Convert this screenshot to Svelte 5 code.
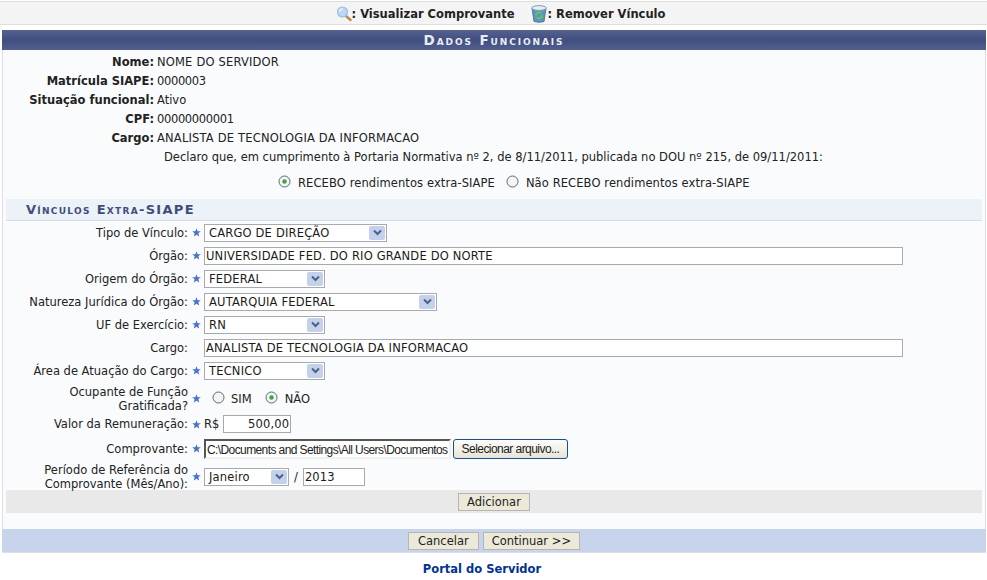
<script>
  const dados = [
    { label: 'Nome:', value: 'NOME DO SERVIDOR', kind: 'caps' },
    { label: 'Matrícula SIAPE:', value: '0000003', kind: 'num' },
    { label: 'Situação funcional:', value: 'Ativo', kind: '' },
    { label: 'CPF:', value: '00000000001', kind: 'num' },
    { label: 'Cargo:', value: 'ANALISTA DE TECNOLOGIA DA INFORMACAO', kind: 'caps' }
  ];
</script>

{#snippet star()}
  <svg class="star" width="9" height="9" viewBox="0 0 10 10" aria-hidden="true">
    <path d="M5 0.3 6.3 3.5 9.8 3.7 7.1 5.9 8 9.4 5 7.5 2 9.4 2.9 5.9 0.2 3.7 3.7 3.5Z" fill="#4a74c9" />
  </svg>
{/snippet}

{#snippet radio(checked)}
  <svg class="radio" width="13" height="13" viewBox="0 0 13 13" aria-hidden="true">
    <circle cx="6.5" cy="6.5" r="5.5" fill="#f4f4f0" stroke="#4f6a86" />
    {#if checked}<circle cx="6.5" cy="6.5" r="2.2" fill="#3f9f4f" />{/if}
  </svg>
{/snippet}

{#snippet select(text, width)}
  <div class="select" style="width: {width}px">
    <span>{text}</span>
    <span class="arrow">
      <svg width="9" height="7" viewBox="0 0 9 7" aria-hidden="true">
        <path d="M1 1.5 4.5 5 8 1.5" fill="none" stroke="#4d6185" stroke-width="2" />
      </svg>
    </span>
  </div>
{/snippet}

<div class="page">
  <div class="toolbar">
    <span class="tool">
      <svg width="16" height="16" viewBox="0 0 16 16" aria-hidden="true">
        <path d="M10 10 14.5 14" stroke="#c08a4c" stroke-width="2.4" stroke-linecap="round" />
        <circle cx="6.5" cy="6" r="5" fill="#bcd6f4" stroke="#9dbde2" stroke-width="1.2" />
        <path d="M3.5 6a3 3 0 0 1 3-3" fill="none" stroke="#eef6ff" stroke-width="1.4" />
      </svg>
      : Visualizar Comprovante
    </span>
    <span class="tool">
      <svg width="16" height="18" viewBox="0 0 16 18" aria-hidden="true">
        <path d="M1 3 3 16.5Q8 18 13 16.5L15 3Z" fill="#5f93c0" stroke="#5578a0" />
        <ellipse cx="8" cy="3" rx="7.2" ry="2.4" fill="#e4eef4" stroke="#7d9db4" />
        <path d="M5 10.5a3 3 0 0 1 5.2-2.2M11 10a3 3 0 0 1-5.2 2.4" fill="none" stroke="#5fd04c" stroke-width="1.7" />
      </svg>
      : Remover Vínculo
    </span>
  </div>

  <form class="panel" on:submit|preventDefault>
    <h2 class="caption">Dados Funcionais</h2>

    <div class="body">
      <dl class="dados">
        {#each dados as row}
          <dt>{row.label}</dt>
          <dd class={row.kind}>{row.value}</dd>
        {/each}
      </dl>

      <p class="declaro">Declaro que, em cumprimento à Portaria Normativa nº 2, de 8/11/2011, publicada no DOU nº 215, de 09/11/2011:</p>

      <div class="recebo">
        {@render radio(true)}<span class="recebo-a">RECEBO rendimentos extra-SIAPE</span>
        {@render radio(false)}<span class="recebo-b">Não RECEBO rendimentos extra-SIAPE</span>
      </div>

      <h3 class="subcaption">Vínculos Extra-SIAPE</h3>

      <div class="fields">
        <label>Tipo de Vínculo:</label>{@render star()}
        <div class="field">{@render select('CARGO DE DIREÇÃO', 183)}</div>

        <label>Órgão:</label>{@render star()}
        <div class="field"><div class="input wide">UNIVERSIDADE FED. DO RIO GRANDE DO NORTE</div></div>

        <label>Origem do Órgão:</label>{@render star()}
        <div class="field">{@render select('FEDERAL', 121)}</div>

        <label>Natureza Jurídica do Órgão:</label>{@render star()}
        <div class="field">{@render select('AUTARQUIA FEDERAL', 233)}</div>

        <label>UF de Exercício:</label>{@render star()}
        <div class="field">{@render select('RN', 121)}</div>

        <label>Cargo:</label><span></span>
        <div class="field"><div class="input wide">ANALISTA DE TECNOLOGIA DA INFORMACAO</div></div>

        <label>Área de Atuação do Cargo:</label>{@render star()}
        <div class="field">{@render select('TECNICO', 121)}</div>

        <label class="tall">Ocupante de Função Gratificada?</label>{@render star()}
        <div class="field opts">
          {@render radio(false)}<span class="opt-a">SIM</span>
          {@render radio(true)}<span class="opt-b">NÃO</span>
        </div>

        <label>Valor da Remuneração:</label>{@render star()}
        <div class="field">R$ <div class="input valor">500,00</div></div>

        <label>Comprovante:</label>{@render star()}
        <div class="field">
          <div class="file-path">C:\Documents and Settings\All Users\Documentos</div>
          <button type="button" class="file-btn">Selecionar arquivo...</button>
        </div>

        <label class="tall">Período de Referência do Comprovante (Mês/Ano):</label>{@render star()}
        <div class="field">
          {@render select('Janeiro', 85)}
          <span class="sep">/</span>
          <div class="input ano">2013</div>
        </div>
      </div>

      <div class="add-band"><button type="button" class="btn">Adicionar</button></div>
    </div>

    <div class="foot">
      <button type="button" class="btn cancel">Cancelar</button>
      <button type="submit" class="btn">Continuar &gt;&gt;</button>
    </div>
  </form>

  <div class="portal"><a href="#portal">Portal do Servidor</a></div>
</div>

<style>
  :global(body) {
    margin: 0;
    background: #fff;
  }

  .page {
    width: 987px;
    height: 580px;
    overflow: hidden;
    box-sizing: border-box;
    padding-top: 1px;
    font-family: "DejaVu Sans", Verdana, sans-serif;
    font-size: 11.5px;
    color: #222;
  }

  .toolbar {
    height: 22px;
    box-sizing: content-box;
    display: flex;
    justify-content: center;
    align-items: center;
    gap: 17px;
    padding-left: 14px;
    background: #f4f4f4;
    border-top: 1px solid #ddd;
    border-bottom: 1px solid #ddd;
    font-weight: bold;
    color: #222;
  }

  .tool {
    display: flex;
    align-items: center;
    white-space: pre;
    padding-top: 1px;
  }

  .tool svg {
    margin-right: -4px;
  }

  .panel {
    margin: 5px 1px 0 2px;
  }

  .caption {
    margin: 0;
    height: 20px;
    line-height: 21px;
    text-align: center;
    font-size: 13.5px;
    font-weight: bold;
    font-variant: small-caps;
    letter-spacing: 1.9px;
    color: #e8ecf4;
    background: linear-gradient(#55628f, #404e80 50%, #525f8d);
  }

  .body {
    height: 479px;
    box-sizing: border-box;
    padding-top: 3px;
    background: #f9fbfd;
    border-left: 1px solid #dde;
    border-right: 1px solid #dde;
  }

  .dados {
    margin: 0;
    display: grid;
    grid-template-columns: 151px 1fr;
    grid-template-rows: 18px;
    grid-auto-rows: 19px;
    column-gap: 3px;
    align-items: center;
  }

  .dados dt {
    text-align: right;
    font-weight: bold;
  }

  .dados dd {
    margin: 0;
  }

  .dados dd.caps {
    letter-spacing: 0.18px;
  }

  .dados dd.num {
    letter-spacing: -0.35px;
  }

  .declaro {
    margin: 1px 0 0;
    height: 19px;
    line-height: 19px;
    padding-left: 161px;
  }

  .recebo {
    height: 32px;
    display: flex;
    align-items: center;
    padding-left: 275px;
    gap: 7px;
    letter-spacing: 0.1px;
  }

  .recebo-a {
    margin-right: 4px;
  }

  .radio {
    margin-top: -3px;
  }

  .subcaption {
    margin: 0 3px;
    height: 21px;
    line-height: 21px;
    padding-left: 20px;
    font-size: 13px;
    font-weight: bold;
    font-variant: small-caps;
    letter-spacing: 1.3px;
    color: #3f4d7c;
    background: #edf1f8;
    border-bottom: 1px solid #d5ddec;
  }

  .fields {
    display: grid;
    grid-template-columns: 185px 16px 1fr;
    grid-template-rows: repeat(7, 23px) 33px 18px 31px 25px;
    align-items: center;
  }

  .fields label {
    text-align: right;
    line-height: 14px;
  }

  .fields label.tall {
    padding-left: 20px;
  }

  .star {
    justify-self: center;
    margin-left: 1px;
  }

  .field {
    display: flex;
    align-items: center;
  }

  .select {
    height: 18px;
    box-sizing: border-box;
    display: flex;
    align-items: center;
    justify-content: space-between;
    padding: 0 1px 0 4px;
    background: #fff;
    border: 1px solid #aaa;
    color: #1a1a1a;
    letter-spacing: 0.18px;
  }

  .arrow {
    width: 16px;
    height: 14px;
    display: flex;
    align-items: center;
    justify-content: center;
    background: #c3d1ed;
    border-radius: 2px;
  }

  .input {
    height: 18px;
    box-sizing: border-box;
    line-height: 16px;
    padding: 0 1px;
    background: #fff;
    border: 1px solid #aaa;
    color: #1a1a1a;
    letter-spacing: 0.18px;
  }

  .wide {
    width: 699px;
  }

  .valor {
    width: 68px;
    margin-left: 4px;
    text-align: right;
  }

  .ano {
    width: 62px;
  }

  .sep {
    margin: 0 5px 0 5px;
  }

  .opts {
    gap: 6px;
    padding-left: 8px;
  }

  .opt-a {
    margin-right: 7px;
  }

  .opt-b {
    margin-left: 1px;
  }

  .file-path {
    width: 247px;
    height: 20px;
    box-sizing: border-box;
    line-height: 18px;
    padding-left: 1px;
    overflow: hidden;
    white-space: nowrap;
    background: #fff;
    border: 2px solid;
    border-color: #555 #f0f0f0 #f0f0f0 #555;
    font-family: "Liberation Sans", Arial, sans-serif;
    font-size: 12px;
    letter-spacing: -0.6px;
    color: #222;
  }

  .file-btn {
    width: 115px;
    height: 20px;
    margin-left: 2px;
    padding: 0;
    border: 1px solid #1d4f8c;
    border-radius: 3px;
    background: linear-gradient(#fdfdfb, #e6e4d8);
    font-family: "Liberation Sans", Arial, sans-serif;
    font-size: 12px;
    letter-spacing: -0.55px;
    color: #222;
  }

  .add-band {
    height: 23px;
    margin: 1px 3px 0;
    display: flex;
    align-items: center;
    justify-content: center;
    background: #e9e9e9;
  }

  .btn {
    height: 18px;
    padding: 0 8px;
    background: #ece9d8;
    border: 1px solid #b5b5b5;
    font-family: inherit;
    font-size: 11.5px;
    color: #222;
  }

  .btn.cancel {
    padding: 0 9px;
  }

  .foot {
    height: 23px;
    display: flex;
    justify-content: center;
    align-items: center;
    gap: 4px;
    background: #c8d4eb;
    border-bottom: 1px solid #dde;
  }

  .portal {
    margin-top: 9px;
    padding-right: 23px;
    text-align: center;
    font-weight: bold;
  }

  .portal a {
    color: #003390;
    text-decoration: none;
  }
</style>
